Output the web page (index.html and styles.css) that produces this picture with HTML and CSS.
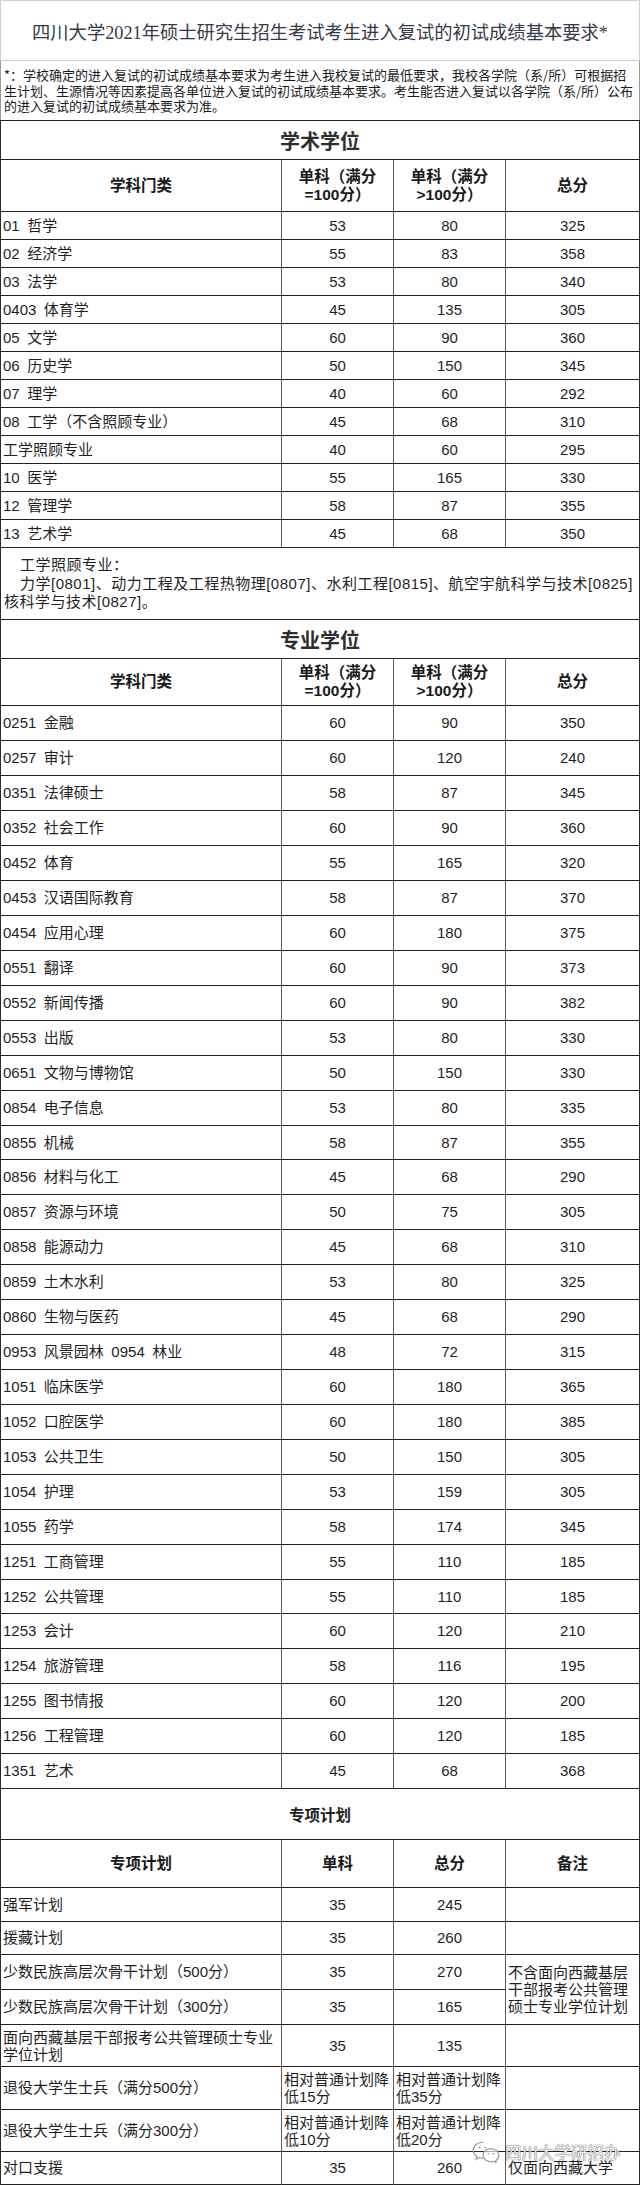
FILE: index.html
```html
<!DOCTYPE html>
<html lang="zh-CN">
<head>
<meta charset="utf-8">
<title>四川大学2021年硕士研究生招生考试考生进入复试的初试成绩基本要求</title>
<link rel="stylesheet" href="styles.css">
</head>
<body>
<div class="page">
  <div class="title">四川大学2021年硕士研究生招生考试考生进入复试的初试成绩基本要求*</div>
  <div class="notes">
    <div class="ln">*：学校确定的进入复试的初试成绩基本要求为考生进入我校复试的最低要求，我校各学院（系/所）可根据招</div>
    <div class="ln">生计划、生源情况等因素提高各单位进入复试的初试成绩基本要求。考生能否进入复试以各学院（系/所）公布</div>
    <div class="ln">的进入复试的初试成绩基本要求为准。</div>
  </div>

  <div class="grid g1">
    <div class="cap big">学术学位</div>
    <div class="c h">学科门类</div><div class="c h">单科（满分<br>=100分）</div><div class="c h">单科（满分<br>&gt;100分）</div><div class="c h e">总分</div>
    <div class="c l">01&ensp;哲学</div><div class="c">53</div><div class="c">80</div><div class="c e">325</div>
    <div class="c l">02&ensp;经济学</div><div class="c">55</div><div class="c">83</div><div class="c e">358</div>
    <div class="c l">03&ensp;法学</div><div class="c">53</div><div class="c">80</div><div class="c e">340</div>
    <div class="c l">0403&ensp;体育学</div><div class="c">45</div><div class="c">135</div><div class="c e">305</div>
    <div class="c l">05&ensp;文学</div><div class="c">60</div><div class="c">90</div><div class="c e">360</div>
    <div class="c l">06&ensp;历史学</div><div class="c">50</div><div class="c">150</div><div class="c e">345</div>
    <div class="c l">07&ensp;理学</div><div class="c">40</div><div class="c">60</div><div class="c e">292</div>
    <div class="c l">08&ensp;工学（不含照顾专业）</div><div class="c">45</div><div class="c">68</div><div class="c e">310</div>
    <div class="c l">工学照顾专业</div><div class="c">40</div><div class="c">60</div><div class="c e">295</div>
    <div class="c l">10&ensp;医学</div><div class="c">55</div><div class="c">165</div><div class="c e">330</div>
    <div class="c l">12&ensp;管理学</div><div class="c">58</div><div class="c">87</div><div class="c e">355</div>
    <div class="c l">13&ensp;艺术学</div><div class="c">45</div><div class="c">68</div><div class="c e">350</div>
  </div>

  <div class="note2">
    <div class="ln in">工学照顾专业：</div>
    <div class="ln in">力学[0801]、动力工程及工程热物理[0807]、水利工程[0815]、航空宇航科学与技术[0825]</div>
    <div class="ln">核科学与技术[0827]。</div>
  </div>

  <div class="grid g2">
    <div class="cap big">专业学位</div>
    <div class="c h">学科门类</div><div class="c h">单科（满分<br>=100分）</div><div class="c h">单科（满分<br>&gt;100分）</div><div class="c h e">总分</div>
    <div class="c l">0251&ensp;金融</div><div class="c">60</div><div class="c">90</div><div class="c e">350</div>
    <div class="c l">0257&ensp;审计</div><div class="c">60</div><div class="c">120</div><div class="c e">240</div>
    <div class="c l">0351&ensp;法律硕士</div><div class="c">58</div><div class="c">87</div><div class="c e">345</div>
    <div class="c l">0352&ensp;社会工作</div><div class="c">60</div><div class="c">90</div><div class="c e">360</div>
    <div class="c l">0452&ensp;体育</div><div class="c">55</div><div class="c">165</div><div class="c e">320</div>
    <div class="c l">0453&ensp;汉语国际教育</div><div class="c">58</div><div class="c">87</div><div class="c e">370</div>
    <div class="c l">0454&ensp;应用心理</div><div class="c">60</div><div class="c">180</div><div class="c e">375</div>
    <div class="c l">0551&ensp;翻译</div><div class="c">60</div><div class="c">90</div><div class="c e">373</div>
    <div class="c l">0552&ensp;新闻传播</div><div class="c">60</div><div class="c">90</div><div class="c e">382</div>
    <div class="c l">0553&ensp;出版</div><div class="c">53</div><div class="c">80</div><div class="c e">330</div>
    <div class="c l">0651&ensp;文物与博物馆</div><div class="c">50</div><div class="c">150</div><div class="c e">330</div>
    <div class="c l">0854&ensp;电子信息</div><div class="c">53</div><div class="c">80</div><div class="c e">335</div>
    <div class="c l">0855&ensp;机械</div><div class="c">58</div><div class="c">87</div><div class="c e">355</div>
    <div class="c l">0856&ensp;材料与化工</div><div class="c">45</div><div class="c">68</div><div class="c e">290</div>
    <div class="c l">0857&ensp;资源与环境</div><div class="c">50</div><div class="c">75</div><div class="c e">305</div>
    <div class="c l">0858&ensp;能源动力</div><div class="c">45</div><div class="c">68</div><div class="c e">310</div>
    <div class="c l">0859&ensp;土木水利</div><div class="c">53</div><div class="c">80</div><div class="c e">325</div>
    <div class="c l">0860&ensp;生物与医药</div><div class="c">45</div><div class="c">68</div><div class="c e">290</div>
    <div class="c l">0953&ensp;风景园林&ensp;0954&ensp;林业</div><div class="c">48</div><div class="c">72</div><div class="c e">315</div>
    <div class="c l">1051&ensp;临床医学</div><div class="c">60</div><div class="c">180</div><div class="c e">365</div>
    <div class="c l">1052&ensp;口腔医学</div><div class="c">60</div><div class="c">180</div><div class="c e">385</div>
    <div class="c l">1053&ensp;公共卫生</div><div class="c">50</div><div class="c">150</div><div class="c e">305</div>
    <div class="c l">1054&ensp;护理</div><div class="c">53</div><div class="c">159</div><div class="c e">305</div>
    <div class="c l">1055&ensp;药学</div><div class="c">58</div><div class="c">174</div><div class="c e">345</div>
    <div class="c l">1251&ensp;工商管理</div><div class="c">55</div><div class="c">110</div><div class="c e">185</div>
    <div class="c l">1252&ensp;公共管理</div><div class="c">55</div><div class="c">110</div><div class="c e">185</div>
    <div class="c l">1253&ensp;会计</div><div class="c">60</div><div class="c">120</div><div class="c e">210</div>
    <div class="c l">1254&ensp;旅游管理</div><div class="c">58</div><div class="c">116</div><div class="c e">195</div>
    <div class="c l">1255&ensp;图书情报</div><div class="c">60</div><div class="c">120</div><div class="c e">200</div>
    <div class="c l">1256&ensp;工程管理</div><div class="c">60</div><div class="c">120</div><div class="c e">185</div>
    <div class="c l">1351&ensp;艺术</div><div class="c">45</div><div class="c">68</div><div class="c e">368</div>
  </div>

  <div class="grid g3">
    <div class="cap small">专项计划</div>
    <div class="c h">专项计划</div><div class="c h">单科</div><div class="c h">总分</div><div class="c h e">备注</div>
    <div class="c l">强军计划</div><div class="c">35</div><div class="c">245</div><div class="c e"></div>
    <div class="c l">援藏计划</div><div class="c">35</div><div class="c">260</div><div class="c e"></div>
    <div class="c l">少数民族高层次骨干计划（500分）</div><div class="c">35</div><div class="c">270</div><div class="c e l span2">不含面向西藏基层干部报考公共管理硕士专业学位计划</div>
    <div class="c l">少数民族高层次骨干计划（300分）</div><div class="c">35</div><div class="c">165</div>
    <div class="c l wrap">面向西藏基层干部报考公共管理硕士专业学位计划</div><div class="c">35</div><div class="c">135</div><div class="c e"></div>
    <div class="c l">退役大学生士兵（满分500分）</div><div class="c l wrap">相对普通计划降低15分</div><div class="c l wrap">相对普通计划降低35分</div><div class="c e"></div>
    <div class="c l">退役大学生士兵（满分300分）</div><div class="c l wrap">相对普通计划降低10分</div><div class="c l wrap">相对普通计划降低20分</div><div class="c e"></div>
    <div class="c l">对口支援</div><div class="c">35</div><div class="c">260</div><div class="c e l">仅面向西藏大学</div>
  </div>

  <div class="wm">
    <svg width="28" height="22" viewBox="0 0 28 22" aria-hidden="true">
      <path d="M11 1.2C5.6 1.2 1.3 4.8 1.3 9.2c0 2.5 1.4 4.7 3.6 6.2l-0.9 2.9 3.3-1.8c1.2 0.4 2.4 0.6 3.7 0.6" fill="none" stroke="#a0a0a0" stroke-width="1.3" stroke-linecap="round"/>
      <path d="M19 7.6c-4.4 0-8 3-8 6.6s3.6 6.6 8 6.6c1 0 1.9-0.1 2.8-0.4l2.6 1.4-0.7-2.3c1.9-1.2 3.2-3.1 3.2-5.3 0-3.6-3.5-6.6-7.9-6.6z" fill="rgba(255,255,255,0.6)" stroke="#a0a0a0" stroke-width="1.3"/>
      <circle cx="7.5" cy="6.6" r="1" fill="#a0a0a0"/>
      <circle cx="13.4" cy="6.6" r="1" fill="#a0a0a0"/>
      <circle cx="16.3" cy="12.6" r="0.85" fill="#a0a0a0"/>
      <circle cx="21.6" cy="12.6" r="0.85" fill="#a0a0a0"/>
    </svg>
    <span class="wm-text">四川大学研招办</span>
  </div>
</div>
</body>
</html>
```

FILE: styles.css
```css
html, body {
  margin: 0;
  padding: 0;
  background: #ffffff;
}

.page {
  position: relative;
  width: 640px;
  font-family: "Liberation Sans", "Noto Sans CJK SC", sans-serif;
  color: #1f1f1f;
}

.title {
  height: 61px;
  box-sizing: border-box;
  border: 1px solid #cfcfcf;
  display: flex;
  align-items: center;
  justify-content: center;
  font-family: "Liberation Serif", "Noto Sans CJK SC", serif;
  font-size: 18.3px;
  color: #343a48;
  white-space: nowrap;
}

.notes {
  height: 59px;
  box-sizing: border-box;
  border-left: 1px solid #9a9a9a;
  border-right: 1px solid #9a9a9a;
  padding: 6px 0 0 3px;
  font-family: "Noto Sans CJK SC", sans-serif;
  font-size: 13px;
  line-height: 15.5px;
  color: #1a1a1a;
}

.ln {
  white-space: nowrap;
}

.note2 {
  height: 71px;
  box-sizing: border-box;
  border-left: 1px solid #2a2a2a;
  border-right: 1px solid #2a2a2a;
  padding: 8px 0 0 3px;
  font-size: 15px;
  line-height: 18.5px;
  letter-spacing: 0.5px;
  color: #1f1f1f;
}

.note2 .in {
  padding-left: 16px;
}

.grid {
  display: grid;
  grid-template-columns: 281px 112px 112px 133px;
  border-left: 1px solid #2a2a2a;
  border-right: 1px solid #2a2a2a;
}

.g1 {
  border-top: 1px solid #222;
  grid-template-rows: 39px 52px repeat(12, 28px);
}

.g2 {
  border-top: 1px solid #222;
  grid-template-rows: 39px 47px repeat(12, 35px) 34px repeat(12, 35px) 34px repeat(5, 35px);
}

.g3 {
  grid-template-rows: 51px 48px 34px 33px 35px 35px 42px 43px 42px 33px;
}

.cap {
  grid-column: 1 / -1;
  box-sizing: border-box;
  border-bottom: 1px solid #222;
  display: flex;
  align-items: center;
  justify-content: center;
  font-weight: bold;
  font-family: "Noto Sans CJK SC", sans-serif;
}

.cap.big {
  font-size: 20px;
  color: #2e2e2e;
}

.cap.small {
  font-size: 15.5px;
  color: #222;
}

.c {
  box-sizing: border-box;
  min-width: 0;
  border-bottom: 1px solid #222;
  border-right: 1px solid #5a5a5a;
  display: flex;
  align-items: center;
  justify-content: center;
  text-align: center;
  padding: 0 2px;
  font-size: 15px;
  line-height: 18px;
  white-space: nowrap;
}

.c.e {
  border-right: none;
}

.c.l {
  justify-content: flex-start;
  text-align: left;
}

.c.wrap {
  white-space: normal;
  line-height: 17px;
}

.c.span2 {
  grid-row: span 2;
  white-space: normal;
  line-height: 17px;
  padding-left: 2px;
}

.h {
  font-weight: bold;
  font-size: 15.5px;
  line-height: 18px;
  color: #1a1a1a;
}

.wm {
  position: absolute;
  left: 472px;
  top: 2141px;
  display: flex;
  align-items: center;
  gap: 5px;
  pointer-events: none;
}

.wm-text {
  font-family: "Noto Sans CJK SC", sans-serif;
  font-size: 16.5px;
  line-height: 22px;
  color: rgba(255, 255, 255, 0.92);
  text-shadow: 0 0 1px rgba(70, 70, 70, 0.9), 0 0 1px rgba(70, 70, 70, 0.7);
  white-space: nowrap;
}
```
